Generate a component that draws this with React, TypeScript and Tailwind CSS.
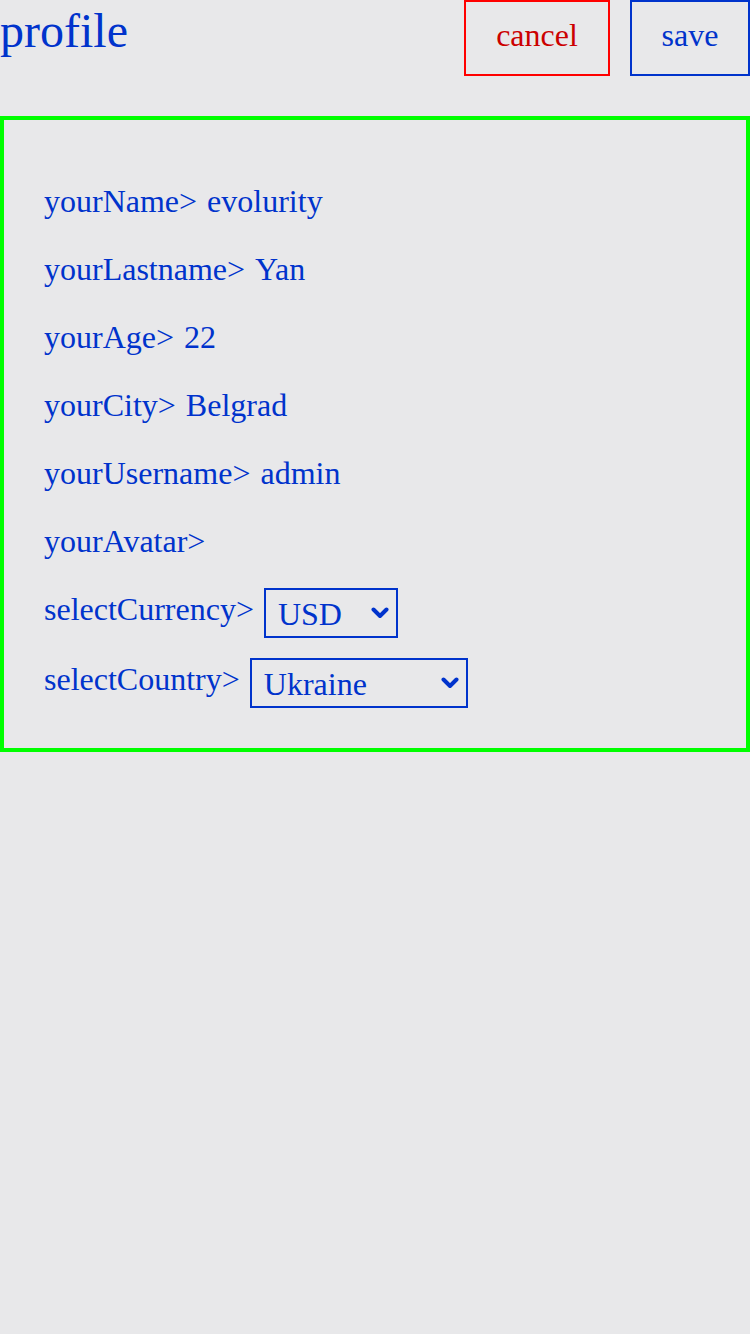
import { useState } from "react";

const fields = [
  { label: "yourName>", value: "evolurity" },
  { label: "yourLastname>", value: "Yan" },
  { label: "yourAge>", value: "22" },
  { label: "yourCity>", value: "Belgrad" },
  { label: "yourUsername>", value: "admin" },
  { label: "yourAvatar>", value: "" },
];

const Chevron = () => (
  <svg
    className="pointer-events-none absolute right-[9px] top-1/2 -translate-y-1/2"
    width="18"
    height="12"
    viewBox="0 0 18 12"
    fill="none"
  >
    <path d="M2.5 2.5 L9 9 L15.5 2.5" stroke="#0033cc" strokeWidth="4" strokeLinecap="round" strokeLinejoin="round" />
  </svg>
);

const App = () => {
  const [currency, setCurrency] = useState("USD");
  const [country, setCountry] = useState("Ukraine");

  return (
    <div
      className="min-h-[1334px] w-[750px] bg-[#e8e8ea] text-[#0033cc]"
      style={{ fontFamily: '"Liberation Serif", "Times New Roman", serif' }}
    >
      {/* header */}
      <div className="flex items-start justify-between">
        <h1 className="mt-[4px] text-[48px] leading-[53px] font-normal">profile</h1>
        <div className="flex gap-[20px]">
          <button className="h-[76px] w-[146px] border-2 border-[#ff0000] pt-[9px] flex items-start justify-center text-[32px] text-[#cc0000]">
            cancel
          </button>
          <button className="h-[76px] w-[120px] border-2 border-[#0033cc] pt-[9px] flex items-start justify-center text-[32px] text-[#0033cc]">
            save
          </button>
        </div>
      </div>

      {/* form */}
      <div className="mt-[40px] border-4 border-[#00ff00] pt-[47px] pb-[40px] pl-[40px] text-[32px]">
        {fields.map((f) => (
          <div key={f.label} className="flex h-[68px] items-center gap-[10px]">
            <span>{f.label}</span>
            {f.value && <span>{f.value}</span>}
          </div>
        ))}

        <div className="mt-[13px] flex items-start gap-[10px]">
          <span className="mt-[3px] leading-[36px]">selectCurrency&gt;</span>
          <div className="relative">
            <select
              value={currency}
              onChange={(e) => setCurrency(e.target.value)}
              className="h-[50px] w-[134px] appearance-none rounded-none border-2 border-[#0033cc] bg-transparent pl-[12px] pb-[3px] text-[32px] text-[#0033cc] outline-none"
            >
              <option>USD</option>
              <option>EUR</option>
              <option>UAH</option>
            </select>
            <Chevron />
          </div>
        </div>

        <div className="mt-[20px] flex items-start gap-[10px]">
          <span className="mt-[3px] leading-[36px]">selectCountry&gt;</span>
          <div className="relative">
            <select
              value={country}
              onChange={(e) => setCountry(e.target.value)}
              className="h-[50px] w-[218px] appearance-none rounded-none border-2 border-[#0033cc] bg-transparent pl-[12px] pb-[3px] text-[32px] text-[#0033cc] outline-none"
            >
              <option>Ukraine</option>
              <option>Serbia</option>
              <option>Poland</option>
            </select>
            <Chevron />
          </div>
        </div>
      </div>
    </div>
  );
};

export default App;
